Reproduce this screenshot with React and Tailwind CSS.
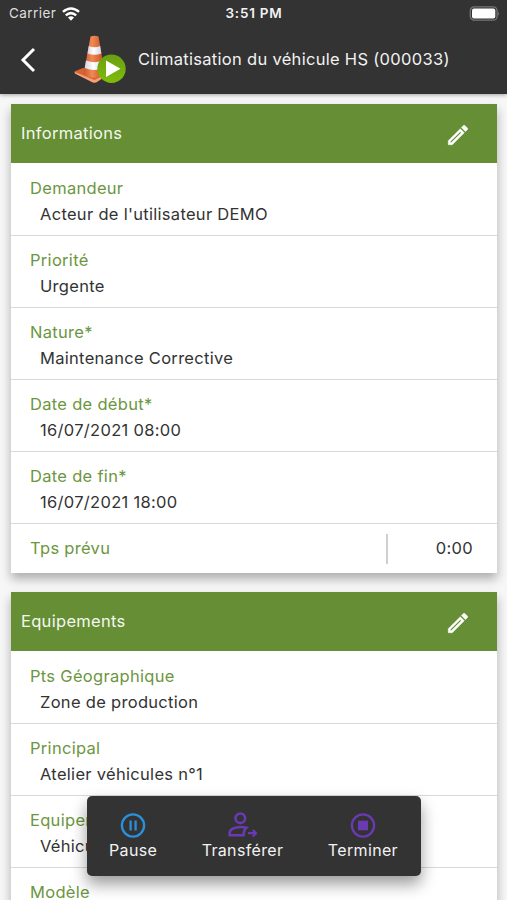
import React from 'react';

const INFORMATIONS = [
    { label: 'Demandeur', value: "Acteur de l'utilisateur DEMO" },
    { label: 'Priorité', value: 'Urgente' },
    { label: 'Nature*', value: 'Maintenance Corrective' },
    { label: 'Date de début*', value: '16/07/2021 08:00' },
    { label: 'Date de fin*', value: '16/07/2021 18:00' },
];

const EQUIPEMENTS = [
    { label: 'Pts Géographique', value: 'Zone de production' },
    { label: 'Principal', value: 'Atelier véhicules n°1' },
    { label: 'Equipement', value: 'Véhicule' },
    { label: 'Modèle', value: '' },
];

const ConeIcon = () => (
    <svg className="w-[52px] h-[50px] shrink-0" viewBox="0 0 52 50">
        <defs>
            <linearGradient id="cone" x1="0" x2="1">
                <stop offset="0" stopColor="#c9582c" />
                <stop offset="0.4" stopColor="#f08a55" />
                <stop offset="1" stopColor="#c24a1c" />
            </linearGradient>
            <linearGradient id="band" x1="0" x2="1">
                <stop offset="0" stopColor="#d5d3e0" />
                <stop offset="0.45" stopColor="#ffffff" />
                <stop offset="1" stopColor="#d3d0de" />
            </linearGradient>
            <linearGradient id="play" x1="0" y1="0" x2="0" y2="1">
                <stop offset="0" stopColor="#6a9f12" />
                <stop offset="1" stopColor="#7fbc0a" />
            </linearGradient>
        </defs>
        <path d="M0.5 36.5 L9 33 L31 36 L32 41 L22 47.5 L19 47.5 L1 38.5 Z" fill="#d9622f" />
        <path d="M0.5 36.8 L20.5 45 L32 39 L32 41 L22 47.5 L19 47.5 L1 38.5 Z" fill="#f0a27b" />
        <path d="M16.5 1.5 Q20.5 -0.2 24.5 1.5 L31 40 Q20 46 9.5 39.5 Z" fill="url(#cone)" />
        <path d="M14.8 11 Q20.5 13.5 26.2 11 L27.4 18.5 Q20.5 21 13.5 18.5 Z" fill="url(#band)" />
        <path d="M12 25.5 Q20.5 29 28.5 25.5 L29.8 33 Q20.5 37 10.7 33 Z" fill="url(#band)" />
        <circle cx="37.5" cy="33.8" r="14.2" fill="url(#play)" />
        <path d="M32 25.5 L46.5 33.8 L32 42 Z" fill="#fff" />
    </svg>
);

const PencilIcon = () => (
    <svg className="w-[26px] h-[26px]" viewBox="0 0 24 24" fill="#fff" stroke="#fff" strokeWidth="0.4">
        <path d="M14.06,9L15,9.94L5.92,19H5V18.08L14.06,9M17.66,3C17.41,3 17.15,3.1 16.96,3.29L15.13,5.12L18.88,8.87L20.71,7.04C21.1,6.65 21.1,6 20.71,5.63L18.37,3.29C18.17,3.09 17.92,3 17.66,3M14.06,6.19L3,17.25V21H6.75L17.81,9.94L14.06,6.19Z" />
    </svg>
);

const StatusBar = () => (
    <div className="grid grid-cols-3 items-center h-[27px] pl-[9px] pr-[7px] text-[13.5px]">
        <div className="flex items-center gap-[6px]">
            <span className="tracking-[0.45px] text-[#dedede]">Carrier</span>
            <svg className="w-[18px] h-[14px]" viewBox="0 0 19 14" fill="none" stroke="#fff" strokeWidth="2.6">
                <path d="M1 4.8 Q9.5 -2.4 18 4.8" />
                <path d="M4 8.4 Q9.5 3.8 15 8.4" />
                <path d="M6.3 10.6 Q9.5 8.2 12.7 10.6 L9.5 14 Z" fill="#fff" stroke="none" />
            </svg>
        </div>
        <span className="-ml-px text-center font-semibold whitespace-nowrap tracking-[0.75px] text-[#f2f2f2]">3:51 PM</span>
        <svg className="justify-self-end w-[31px] h-[15px]" viewBox="0 0 31 15">
            <rect x="1.3" y="0.8" width="26.8" height="13.4" rx="4" fill="none" stroke="#777" strokeWidth="1.3" />
            <rect x="3" y="2.6" width="23.3" height="9.8" rx="2" fill="#fff" />
            <path d="M29.2 5.2 Q31 7.5 29.2 9.8 Z" fill="#777" />
        </svg>
    </div>
);

const Card = ({ title, rows, children }) => (
    <section className="bg-white shadow-[0_6px_10px_rgba(0,0,0,0.3)]">
        <div className="flex items-center justify-between h-[59px] pl-[10px] pr-[26px] bg-[#658e35] text-white">
            <h2 className="pb-[2px] leading-5 tracking-[0.3px] text-[#f4f8ef]">{title}</h2>
            <div className="pt-[3px]">
                <PencilIcon />
            </div>
        </div>
        {rows.map(row => (
            <div key={row.label} className="h-[72px] pl-[19px] pt-[11px] border-t border-[#d9d9d9] first-of-type:border-t-0 leading-[26px] [&:nth-child(2)]:border-[#fff]">
                <div className="text-[#6c9640]">{row.label}</div>
                <div className="pl-[10px]">{row.value}</div>
            </div>
        ))}
        {children}
    </section>
);

const Action = ({ label, children }) => (
    <button className="flex flex-col items-center text-[#f2f2f2]">
        <svg className="w-[32px] h-[26px]" viewBox="0 0 32 26" fill="none">{children}</svg>
        <span className="leading-6">{label}</span>
    </button>
);

const App = () => {
    return (
        <div className="relative w-full h-[900px] overflow-hidden bg-[#f7f7f7] font-['Inter',sans-serif] text-[16.5px] tracking-[0.3px] text-[#333]">
            <header className="h-[94px] bg-[#333] shadow-[0_1px_4px_rgba(0,0,0,0.35)]">
                <StatusBar />
                <div className="flex items-center h-[65px] pl-[20px]">
                    <svg className="w-[16px] h-[26px] shrink-0" viewBox="0 0 16 26" fill="none" stroke="#fff" strokeWidth="3">
                        <path d="M14 2 L3 13 L14 24" />
                    </svg>
                    <div className="pl-[38px]">
                        <ConeIcon />
                    </div>
                    <h1 className="pl-[12px] whitespace-nowrap text-[#f2f2f2]">Climatisation du véhicule HS (000033)</h1>
                </div>
            </header>

            <main className="flex flex-col gap-[19px] pl-[11px] pr-[10px] pt-[10px]">
                <Card title="Informations" rows={INFORMATIONS}>
                    <div className="flex items-center h-[50px] pl-[19px] pr-[24px] border-t border-[#d9d9d9]">
                        <span className="flex-1 text-[#6c9640]">Tps prévu</span>
                        <div className="w-[2px] h-[30px] bg-[#cfcfcf]" />
                        <span className="w-[85px] text-right">0:00</span>
                    </div>
                </Card>
                <Card title="Equipements" rows={EQUIPEMENTS} />
            </main>

            <div className="absolute left-[87px] top-[796px] flex justify-between w-[334px] h-[80px] pl-[22px] pr-[23px] pt-[16px] rounded-[5px] bg-[#333] text-[16px] tracking-[0.35px] shadow-[0_8px_16px_rgba(0,0,0,0.4)]">
                <Action label="Pause">
                    <g stroke="#2b90d9" strokeWidth="2.3">
                        <circle cx="16" cy="13.5" r="11.1" />
                        <path d="M13.6 8.5 V18.5 M18.6 8.5 V18.5" />
                    </g>
                </Action>
                <Action label="Transférer">
                    <g stroke="#6a3ab2" strokeWidth="2.6">
                        <circle cx="13.3" cy="6.3" r="4.8" />
                        <path d="M19.3 15.7 C12 14 3 16 2.7 20.5 V23.2 H16.5 C16.7 20 17.2 17.5 19.3 15.7 Z" />
                        <path d="M21 21.2 H28.5 M25.8 17.9 L29 21.2 L25.8 24.5" strokeWidth="2.2" />
                    </g>
                </Action>
                <Action label="Terminer">
                    <circle cx="16" cy="13.5" r="11.1" stroke="#6a3ab2" strokeWidth="2.3" />
                    <rect x="11" y="8.7" width="10" height="9.6" fill="#6a3ab2" />
                </Action>
            </div>
        </div>
    );
};

export default App;
